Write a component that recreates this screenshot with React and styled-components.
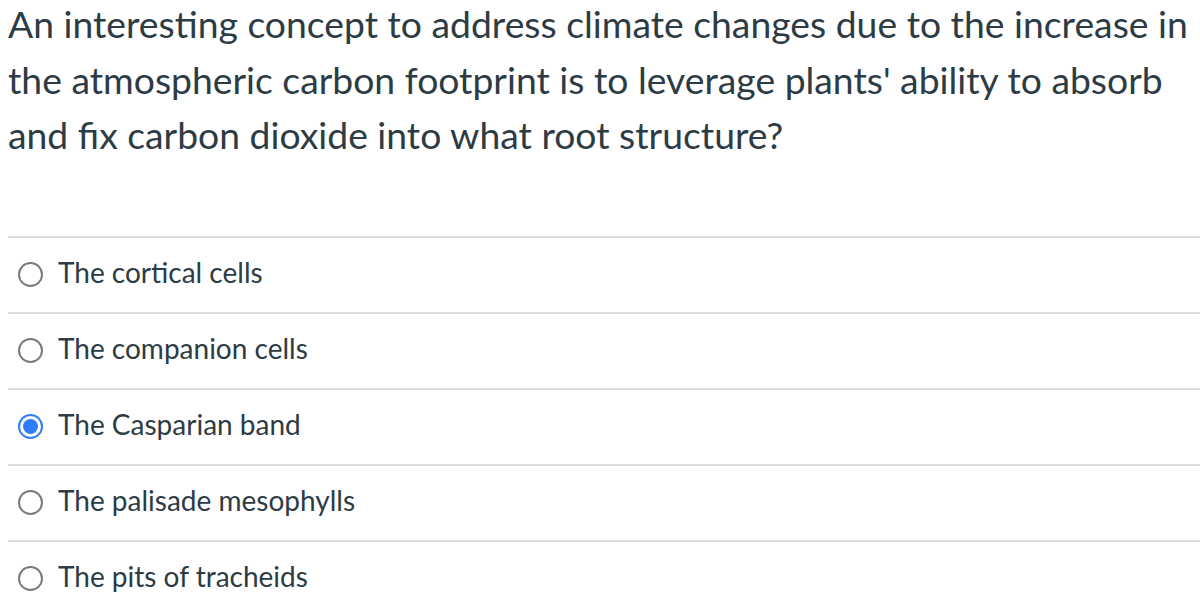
import React, { useState } from "react";
import styled, { createGlobalStyle } from "styled-components";

const GlobalStyle = createGlobalStyle`
  html, body {
    margin: 0;
    padding: 0;
    background: #ffffff;
  }
  body {
    font-family: Lato, "Open Sans", sans-serif;
    color: #2d3b45;
    overflow: hidden;
  }
`;

const Page = styled.div`
  padding: 0 0 0 8px;
`;

const Question = styled.div`
  font-size: 37.3px;
  line-height: 55.5px;
  margin: -4px 0 0 0;
`;

const Answers = styled.div`
  margin-top: 73px;
  display: flex;
  flex-direction: column;
`;

const AnswerRow = styled.label`
  display: flex;
  align-items: center;
  gap: 15px;
  height: 74px;
  border-top: 2px solid #dadcdd;
  padding-left: 10px;
  cursor: pointer;
`;

const Radio = styled.span`
  box-sizing: border-box;
  width: 25px;
  height: 25px;
  border-radius: 50%;
  flex: none;
  border: 2px solid ${(p) => (p.checked ? "#2e7cf6" : "#737b80")};
  display: flex;
  align-items: center;
  justify-content: center;

  &::after {
    content: "";
    width: 15px;
    height: 15px;
    border-radius: 50%;
    background: #2e7cf6;
    display: ${(p) => (p.checked ? "block" : "none")};
  }
`;

const AnswerText = styled.span`
  font-size: 28px;
  line-height: 30px;
  margin-top: -5px;
`;

const answers = [
  "The cortical cells",
  "The companion cells",
  "The Casparian band",
  "The palisade mesophylls",
  "The pits of tracheids",
];

const App = () => {
  const [selected, setSelected] = useState(2);

  return (
    <Page>
      <GlobalStyle />
      <Question>
        An interesting concept to address climate changes due to the increase in
        the atmospheric carbon footprint is to leverage plants' ability to absorb
        and fix carbon dioxide into what root structure?
      </Question>
      <Answers>
        {answers.map((a, i) => (
          <AnswerRow key={a} onClick={() => setSelected(i)}>
            <Radio checked={selected === i} />
            <AnswerText>{a}</AnswerText>
          </AnswerRow>
        ))}
      </Answers>
    </Page>
  );
};

export default App;
